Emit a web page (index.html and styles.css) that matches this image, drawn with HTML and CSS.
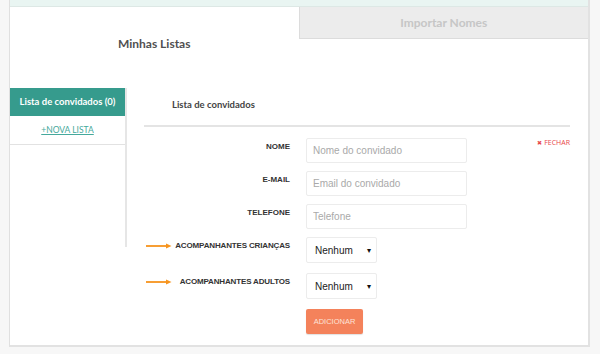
FILE: index.html
```html
<!DOCTYPE html>
<html lang="pt">
<head>
<meta charset="utf-8">
<title>Minhas Listas</title>
<link rel="stylesheet" href="styles.css">
</head>
<body>
<div class="panel">
  <div class="strip"></div>
  <div class="tabs">
    <div class="tab tab-active">Minhas Listas</div>
    <div class="tab tab-idle">Importar Nomes</div>
  </div>
  <div class="content">
    <aside class="sidebar">
      <div class="side-item side-active">Lista de convidados (0)</div>
      <div class="side-item"><a class="new-list" href="#">+NOVA LISTA</a></div>
    </aside>
    <main class="main">
      <div class="main-title">Lista de convidados</div>
      <form class="form">
        <div class="row">
          <label class="label">NOME</label>
          <input class="field" type="text" placeholder="Nome do convidado">
          <a class="close" href="#"><span class="close-x">✖</span>FECHAR</a>
        </div>
        <div class="row">
          <label class="label">E-MAIL</label>
          <input class="field" type="text" placeholder="Email do convidado">
        </div>
        <div class="row">
          <label class="label">TELEFONE</label>
          <input class="field" type="text" placeholder="Telefone">
        </div>
        <div class="row row-select">
          <label class="label label-arrow">
            <svg class="arrow" width="26" height="6" viewBox="0 0 26 6"><path d="M0 3H22" stroke="#f7941d" stroke-width="1.8"/><path d="M20 0.6L25.5 3L20 5.4Z" fill="#f7941d"/></svg>
            <span>ACOMPANHANTES CRIANÇAS</span>
          </label>
          <div class="select"><span>Nenhum</span><span class="caret">▾</span></div>
        </div>
        <div class="row row-select">
          <label class="label label-arrow">
            <svg class="arrow" width="26" height="6" viewBox="0 0 26 6"><path d="M0 3H22" stroke="#f7941d" stroke-width="1.8"/><path d="M20 0.6L25.5 3L20 5.4Z" fill="#f7941d"/></svg>
            <span>ACOMPANHANTES ADULTOS</span>
          </label>
          <div class="select"><span>Nenhum</span><span class="caret">▾</span></div>
        </div>
        <div class="row row-button">
          <span class="label"></span>
          <button class="btn" type="button">ADICIONAR</button>
        </div>
      </form>
    </main>
  </div>
</div>
</body>
</html>
```

FILE: styles.css
```css
* { box-sizing: border-box; }
html, body { margin: 0; padding: 0; }
body {
  background: #f7f7f7;
  font-family: Lato, "Open Sans", sans-serif;
  width: 600px;
  height: 354px;
  overflow: hidden;
}
.panel {
  margin-left: 9px;
  width: 581px;
  background: #fff;
  border-left: 1px solid #e0e0e0;
  border-right: 2px solid #e2e2e2;
  border-bottom: 2px solid #e2e2e2;
}
.strip {
  height: 7px;
  background: #e9f5f2;
  border-bottom: 1px solid #dde8e5;
}
.tabs {
  display: flex;
  align-items: flex-start;
}
.tab {
  flex: 1;
  text-align: center;
  font-weight: 700;
}
.tab-active {
  height: 81px;
  padding-top: 28px;
  font-size: 12px;
  line-height: 18px;
  color: #505050;
}
.tab-idle {
  height: 32px;
  line-height: 31px;
  font-size: 12px;
  color: #c6c6c6;
  background: #ececec;
  border-left: 1px solid #dcdcdc;
  border-bottom: 1px solid #dcdcdc;
}
.content {
  display: flex;
  align-items: flex-start;
}
.sidebar {
  width: 117px;
  height: 159px;
  border-right: 2px solid #e6e6e6;
  flex: none;
}
.side-item {
  height: 29px;
  border-bottom: 1px solid #e2e2e2;
  text-align: center;
  font-size: 9.5px;
  line-height: 28px;
}
.side-active {
  height: 28px;
  line-height: 28px;
  background: #369b8d;
  color: #fff;
  font-weight: 700;
  border-bottom: none;
}
.new-list {
  color: #45a99c;
  text-decoration: underline;
  font-size: 8.5px;
}
.main {
  flex: 1;
  padding: 10px 18px 11px 17px;
}
.main-title {
  padding: 0 0 13px 28px;
  font-size: 9.5px;
  line-height: 14px;
  font-weight: 700;
  color: #444;
  border-bottom: 2px solid #e4e4e4;
}
.form {
  margin-top: 11px;
  display: flex;
  flex-direction: column;
}
.row {
  display: flex;
  align-items: flex-start;
  gap: 16px;
  margin-bottom: 8px;
}
.row-select { margin-bottom: 10px; }
.row-button { margin-bottom: 0; }
.label {
  width: 146px;
  flex: none;
  text-align: right;
  padding-top: 4px;
  font-family: "Liberation Sans", Arial, sans-serif;
  font-weight: 700;
  font-size: 8px;
  line-height: 10px;
  color: #333;
  white-space: nowrap;
}
.label-arrow {
  display: flex;
  align-items: center;
  justify-content: space-between;
  padding-left: 2px;
  letter-spacing: -0.15px;
}
.arrow { display: block; flex: none; }
.field {
  width: 161px;
  height: 25px;
  border: 1px solid #ececec;
  border-radius: 2px;
  padding: 0 6px;
  font-family: "Liberation Sans", Arial, sans-serif;
  font-size: 10px;
  color: #333;
  outline: none;
}
.field::placeholder { color: #a9a9a9; }
.close {
  margin-left: auto;
  font-family: "Open Sans", sans-serif;
  font-size: 7px;
  line-height: 9px;
  color: #e8474a;
  text-decoration: none;
}
.close-x {
  font-size: 6px;
  margin-right: 2px;
}
.select {
  width: 71px;
  height: 26px;
  border: 1px solid #ececec;
  border-radius: 2px;
  padding: 0 5px 0 8px;
  display: flex;
  align-items: center;
  justify-content: space-between;
  font-family: "Liberation Sans", Arial, sans-serif;
  font-size: 10px;
  color: #222;
}
.caret { font-size: 8px; color: #111; }
.btn {
  width: 57px;
  height: 25px;
  border: none;
  border-radius: 2px;
  background: #f4825b;
  color: #fde3d8;
  font-family: "Liberation Sans", Arial, sans-serif;
  font-size: 7.5px;
  padding: 0;
  box-shadow: 0 1px 1px rgba(0,0,0,0.12);
}
```
